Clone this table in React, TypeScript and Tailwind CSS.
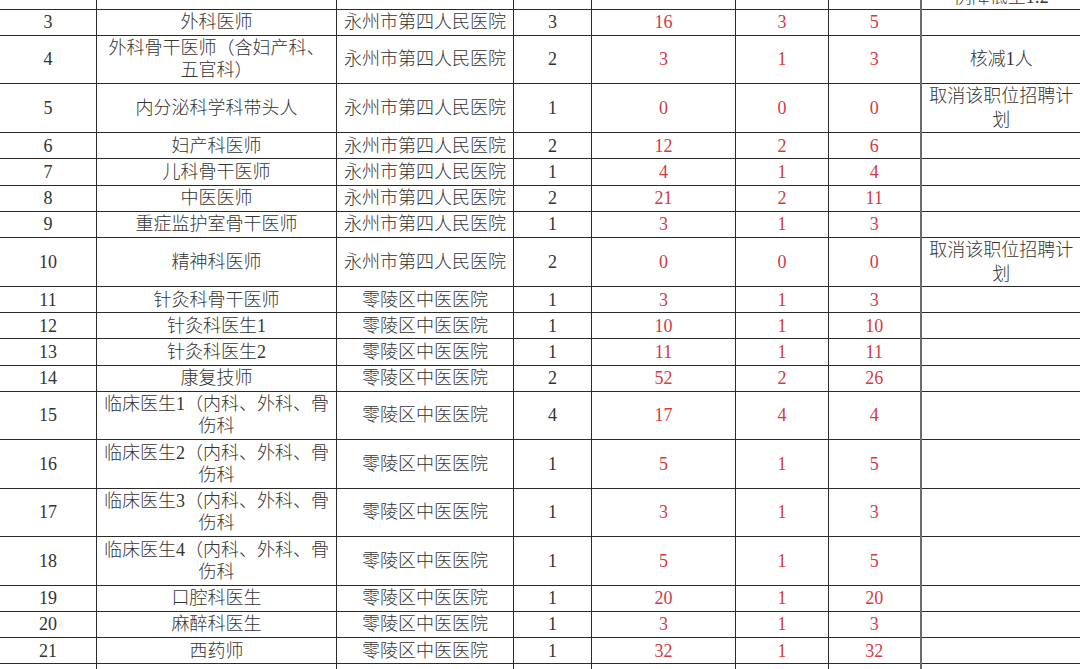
import React from "react";

type Row = {
	no: string;
	post: React.ReactNode;
	unit: string;
	plan: string;
	applied: string;
	hire: string;
	ratio: string;
	note?: React.ReactNode;
	tall?: boolean;
};

const SIYI = "永州市第四人民医院";
const ZHONGYI = "零陵区中医医院";

const clinical = (n: number) => (
	<>
		临床医生{n}（内科、外科、骨
		<br />
		伤科
	</>
);

const cancel = (
	<>
		取消该职位招聘计
		<br />划
	</>
);

// row 2 is mostly scrolled out of view, only the tail of its note shows
const rows: Array<Row> = [
	{
		no: "",
		post: "",
		unit: "",
		plan: "",
		applied: "",
		hire: "",
		ratio: "",
		note: (
			<>
				按招聘计划开考比
				<br />
				例降低至1:2
			</>
		),
		tall: true,
	},
	{ no: "3", post: "外科医师", unit: SIYI, plan: "3", applied: "16", hire: "3", ratio: "5" },
	{
		no: "4",
		post: (
			<>
				外科骨干医师（含妇产科、
				<br />
				五官科）
			</>
		),
		unit: SIYI,
		plan: "2",
		applied: "3",
		hire: "1",
		ratio: "3",
		note: "核减1人",
		tall: true,
	},
	{ no: "5", post: "内分泌科学科带头人", unit: SIYI, plan: "1", applied: "0", hire: "0", ratio: "0", note: cancel, tall: true },
	{ no: "6", post: "妇产科医师", unit: SIYI, plan: "2", applied: "12", hire: "2", ratio: "6" },
	{ no: "7", post: "儿科骨干医师", unit: SIYI, plan: "1", applied: "4", hire: "1", ratio: "4" },
	{ no: "8", post: "中医医师", unit: SIYI, plan: "2", applied: "21", hire: "2", ratio: "11" },
	{ no: "9", post: "重症监护室骨干医师", unit: SIYI, plan: "1", applied: "3", hire: "1", ratio: "3" },
	{ no: "10", post: "精神科医师", unit: SIYI, plan: "2", applied: "0", hire: "0", ratio: "0", note: cancel, tall: true },
	{ no: "11", post: "针灸科骨干医师", unit: ZHONGYI, plan: "1", applied: "3", hire: "1", ratio: "3" },
	{ no: "12", post: "针灸科医生1", unit: ZHONGYI, plan: "1", applied: "10", hire: "1", ratio: "10" },
	{ no: "13", post: "针灸科医生2", unit: ZHONGYI, plan: "1", applied: "11", hire: "1", ratio: "11" },
	{ no: "14", post: "康复技师", unit: ZHONGYI, plan: "2", applied: "52", hire: "2", ratio: "26" },
	{ no: "15", post: clinical(1), unit: ZHONGYI, plan: "4", applied: "17", hire: "4", ratio: "4", tall: true },
	{ no: "16", post: clinical(2), unit: ZHONGYI, plan: "1", applied: "5", hire: "1", ratio: "5", tall: true },
	{ no: "17", post: clinical(3), unit: ZHONGYI, plan: "1", applied: "3", hire: "1", ratio: "3", tall: true },
	{ no: "18", post: clinical(4), unit: ZHONGYI, plan: "1", applied: "5", hire: "1", ratio: "5", tall: true },
	{ no: "19", post: "口腔科医生", unit: ZHONGYI, plan: "1", applied: "20", hire: "1", ratio: "20" },
	{ no: "20", post: "麻醉科医生", unit: ZHONGYI, plan: "1", applied: "3", hire: "1", ratio: "3" },
	{ no: "21", post: "西药师", unit: ZHONGYI, plan: "1", applied: "32", hire: "1", ratio: "32" },
	{ no: "", post: "", unit: "", plan: "", applied: "", hire: "", ratio: "" },
];

const cell = "border border-[#2a2a2a] p-0 text-center align-middle";
const red = "text-[#d23a44]";

export default function App() {
	return (
		<div
			className="h-[669px] w-[1080px] overflow-hidden bg-white text-[18px] leading-[22px] text-[#333333]"
			style={{ fontFamily: '"Liberation Serif", "Noto Sans CJK SC", serif' }}
		>
			<table className="mt-[-40.5px] ml-[-1px] w-[1082px] table-fixed border-collapse font-light">
				<colgroup>
					<col className="w-[97px]" />
					<col className="w-[240px]" />
					<col className="w-[177px]" />
					<col className="w-[78px]" />
					<col className="w-[144px]" />
					<col className="w-[93px]" />
					<col className="w-[92px]" />
					<col className="w-[161px]" />
				</colgroup>
				<tbody>
					{rows.map((r, i) => (
						<tr key={i} className={r.tall ? "h-[48.5px]" : "h-[26.2px]"}>
							<td className={cell}>{r.no}</td>
							<td className={cell}>{r.post}</td>
							<td className={cell}>{r.unit}</td>
							<td className={cell}>{r.plan}</td>
							<td className={`${cell} ${red}`}>{r.applied}</td>
							<td className={`${cell} ${red}`}>{r.hire}</td>
							<td className={`${cell} ${red}`}>{r.ratio}</td>
							<td className={`${cell} border-l-2 border-l-[#6b6b6b] leading-[24px]`}>
								{r.note}
							</td>
						</tr>
					))}
				</tbody>
			</table>
		</div>
	);
}
